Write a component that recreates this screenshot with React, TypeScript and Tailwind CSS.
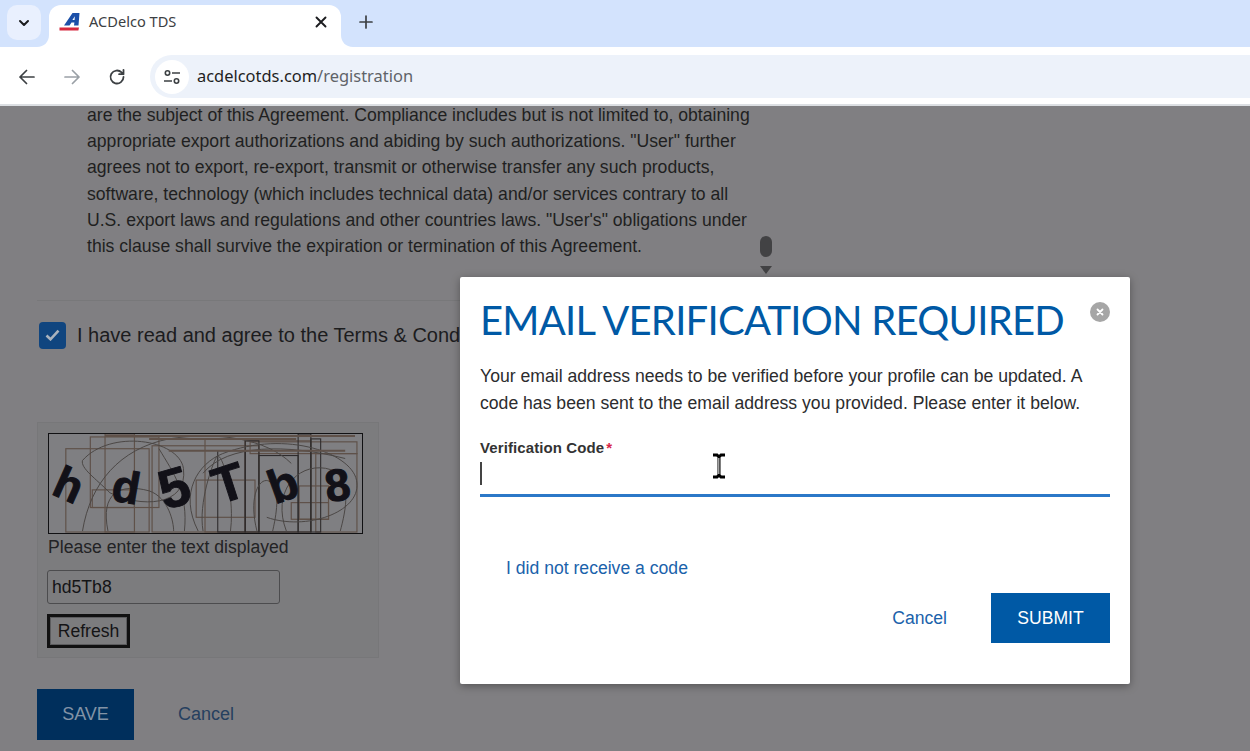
import React from "react";

const lines = [
  "are the subject of this Agreement. Compliance includes but is not limited to, obtaining",
  'appropriate export authorizations and abiding by such authorizations. "User" further',
  "agrees not to export, re-export, transmit or otherwise transfer any such products,",
  "software, technology (which includes technical data) and/or services contrary to all",
  'U.S. export laws and regulations and other countries laws. "User\'s" obligations under',
  "this clause shall survive the expiration or termination of this Agreement.",
];

function Captcha() {
  const rects = [
    [40, 3, 70, 72], [55, 0, 30, 100], [15, 15, 85, 85], [103, 12, 109, 88], [157, 5, 41, 95],
    [198, 7, 67, 93], [203, 8, 109, 12], [42, 57, 43, 18], [148, 47, 60, 38], [245, 70, 38, 17],
    [253, 53, 30, 34], [270, 20, 42, 80],
  ];
  const dark = [[170, 17, 28, 83], [198, 7, 14, 93], [212, 22, 40, 78], [252, 0, 13, 100], [265, 5, 10, 95]];
  const curves = [
    "M32 27 C60 -5 130 5 135 35 C140 75 90 75 60 60 C45 45 30 35 32 27",
    "M32 99 C40 50 70 15 120 5 C170 -3 220 5 245 30",
    "M150 99 C130 60 150 30 175 20 C240 -5 310 20 312 50 C315 80 260 99 220 85",
    "M58 99 C50 60 70 50 100 58 C120 65 125 90 125 99",
    "M155 99 C150 70 165 30 168 25 C172 10 188 60 183 99",
    "M240 99 C225 60 250 30 280 35 C310 40 300 80 295 99",
    "M155 40 C180 10 240 10 300 25 M110 15 C125 40 140 60 136 99",
    "M210 99 C200 60 215 40 225 50 C235 60 228 90 226 99",
  ];
  const letters: [string, number, number, number, number][] = [
    ["h", 19, 68, 24, 46],
    ["d", 77, 70, 10, 46],
    ["5", 126, 74, -16, 56],
    ["T", 181, 68, -18, 52],
    ["b", 236, 68, -20, 48],
    ["8", 292, 68, -8, 46],
  ];
  return (
    <svg width="315" height="101" viewBox="0 0 315 101" className="box-border block border border-[#111113] bg-[#7f7f82]">
      {rects.map((r, i) => (
        <rect key={i} x={r[0]} y={r[1]} width={r[2]} height={r[3]} fill="none" stroke="#5f5149" strokeWidth="1.2" />
      ))}
      {dark.map((r, i) => (
        <rect key={i} x={r[0]} y={r[1]} width={r[2]} height={r[3]} fill="none" stroke="#2d2a2b" strokeWidth="1.1" />
      ))}
      {curves.map((d, i) => (
        <path key={i} d={d} fill="none" stroke="#4a4644" strokeWidth="1" />
      ))}
      <path d="M55 2 H310 M100 5 H250 M120 17 H300" stroke="#5f5149" strokeWidth="2" fill="none" />
      {letters.map(([c, x, y, r, s]) => (
        <text
          key={c}
          x={x}
          y={y}
          transform={`rotate(${r} ${x} ${y - 18})`}
          fontFamily="'Liberation Sans', sans-serif"
          fontWeight="700"
          fontSize={s}
          fill="#121118"
          stroke="#121118"
          strokeWidth="1"
          textAnchor="middle"
        >
          {c}
        </text>
      ))}
    </svg>
  );
}

export default function App() {
  return (
    <div className="relative flex h-[751px] w-[1250px] flex-col overflow-hidden font-['Liberation_Sans',Arial,sans-serif]">
      {/* Tab strip */}
      <div className="flex h-[47px] shrink-0 items-end bg-[#d3e3fd] pl-[7px]">
        <div className="mb-[7px] flex h-[35px] w-[34px] items-center justify-center rounded-[10px] bg-[#e9f0fe]">
          <svg width="14" height="14" viewBox="0 0 14 14" fill="none" stroke="#1b1c1f" strokeWidth="2" strokeLinecap="round" strokeLinejoin="round">
            <path d="M3 5l4 4 4-4" />
          </svg>
        </div>
        <div className="relative ml-[8px] flex h-[42px] w-[292px] items-center rounded-t-[12px] bg-white pb-[8px] pl-[10px] pr-[14px]">
          <svg width="12" height="12" viewBox="0 0 12 12" className="absolute bottom-0 left-[-12px]">
            <path d="M12 0V12H0C7 12 12 7 12 0Z" fill="#fff" />
          </svg>
          <svg width="12" height="12" viewBox="0 0 12 12" className="absolute bottom-0 right-[-12px]">
            <path d="M0 0V12H12C5 12 0 7 0 0Z" fill="#fff" />
          </svg>
          <svg width="21" height="20" viewBox="0 0 21 20" className="shrink-0">
            <path d="M5 13.5 L13.5 1 H20.5 L19.5 13.5 H15 L15.4 10.5 H12.5 L10.5 13.5 Z" fill="#1c50a8" />
            <path d="M13.4 8 L15.8 4.3 L15.6 8 Z" fill="#fff" />
            <path d="M0.5 15.5 H20 L19.4 18.5 H0.5 Z" fill="#d6293e" />
          </svg>
          <span className="ml-[9px] flex-1 font-['Noto_Sans',sans-serif] text-[14.6px] text-[#3c4043]">ACDelco TDS</span>
          <svg width="12" height="12" viewBox="0 0 12 12" stroke="#1b1c1f" strokeWidth="1.9" strokeLinecap="round">
            <path d="M1.5 1.5l9 9M10.5 1.5l-9 9" />
          </svg>
        </div>
        <div className="mb-[13px] ml-[18px] flex h-[24px] w-[14px] items-center">
          <svg width="14" height="14" viewBox="0 0 14 14" stroke="#3c4043" strokeWidth="1.7" strokeLinecap="round">
            <path d="M7 1v12M1 7h12" />
          </svg>
        </div>
      </div>

      {/* Toolbar */}
      <div className="flex h-[59px] shrink-0 items-center border-b-2 border-[#dcdfe3] bg-white pl-[19px] pt-[2px]">
        <svg width="16" height="16" viewBox="0 0 16 16" fill="none" stroke="#3c4043" strokeWidth="1.7" strokeLinecap="round" strokeLinejoin="round">
          <path d="M15 8H1M7.5 1.5L1 8l6.5 6.5" />
        </svg>
        <svg width="16" height="16" viewBox="0 0 16 16" fill="none" stroke="#9aa0a6" strokeWidth="1.7" strokeLinecap="round" strokeLinejoin="round" className="ml-[29px]">
          <path d="M1 8h14M8.5 1.5L15 8l-6.5 6.5" />
        </svg>
        <svg width="18" height="18" viewBox="0 0 18 18" fill="none" stroke="#3c4043" strokeWidth="1.8" strokeLinecap="round" strokeLinejoin="round" className="ml-[28px]">
          <path d="M15.5 9a6.5 6.5 0 1 1-1.9-4.6L15.5 6.2M15.5 1.8v4.4h-4.4" />
        </svg>
        <div className="ml-[24px] flex h-[43px] flex-1 items-center rounded-l-[22px] bg-[#edf2fa] pl-[5px]">
          <div className="flex h-[34px] w-[34px] items-center justify-center rounded-full bg-white">
            <svg width="18" height="16" viewBox="0 0 18 16" fill="none" stroke="#3c4043" strokeWidth="1.6">
              <circle cx="4.5" cy="4" r="2.2" />
              <path d="M9 4h8M1 12h8" />
              <circle cx="13.5" cy="12" r="2.2" />
            </svg>
          </div>
          <span className="ml-[8px] font-['Noto_Sans',sans-serif] text-[16.45px] text-[#1f1f1f]">
            acdelcotds.com<span className="text-[#5f6368]">/registration</span>
          </span>
        </div>
      </div>

      {/* Page */}
      <div className="relative flex-1 bg-[#807f82] text-[#1c1c1e]">
        <div className="flex w-[770px] flex-col pl-[37px]">
          <div className="-mt-[4.5px] pl-[50px]">
            {lines.map((l) => (
              <div key={l} className="h-[26.4px] whitespace-nowrap text-[17.63px] leading-[26.4px] text-[#1f1f21]">
                {l}
              </div>
            ))}
          </div>
          <div className="mt-[40.5px] h-px w-[730px] bg-[#78787a]" />
          <div className="ml-[2px] mt-[20px] flex h-[28px] items-center">
            <div className="flex h-[27px] w-[27px] items-center justify-center rounded-[4px] bg-[#10457f]">
              <svg width="15" height="12" viewBox="0 0 15 12" fill="none" stroke="#a9b2bd" strokeWidth="2.6" strokeLinejoin="miter">
                <path d="M1.5 6.5l4 3.8 8-8.6" />
              </svg>
            </div>
            <span className="ml-[11px] whitespace-nowrap text-[20px] text-[#1c1c1e]">I have read and agree to the Terms &amp; Conditions</span>
          </div>
          <div className="mt-[73px] h-[236px] w-[342px] border border-[#777779] bg-[#7c7c7e] pl-[10px] pt-[10px]">
            <Captcha />
            <div className="mt-[1px] text-[17.6px] leading-[24px] text-[#232325]">Please enter the text displayed</div>
            <div className="-ml-[1px] mt-[11px] flex h-[34px] w-[233px] items-center rounded-[3px] border border-[#4c4c4e] pl-[4px] text-[17.6px] text-[#141416]">hd5Tb8</div>
            <div className="-ml-[1px] mt-[10px] flex h-[34px] w-[83px] items-center justify-center border-[3px] border-[#111] text-[17.6px] text-[#141416] shadow-[inset_0_0_0_1px_#5c5c5e]">Refresh</div>
          </div>
          <div className="mt-[31px] flex items-center">
            <div className="flex h-[51px] w-[97px] items-center justify-center bg-[#002f5c] text-[18px] text-[#8293a6]">SAVE</div>
            <span className="ml-[44px] text-[18px] text-[#26405f]">Cancel</span>
          </div>
        </div>

        {/* Scroll indicator */}
        <div className="absolute left-[760px] top-[130px] h-[21px] w-[12px] rounded-[6px] bg-[#424244]" />
        <div className="absolute left-[760px] top-[160px] h-0 w-0 border-x-[6px] border-t-[8px] border-x-transparent border-t-[#424244]" />

        {/* Modal */}
        <div className="absolute left-[460px] top-[171px] flex h-[407px] w-[670px] flex-col rounded-[2px] bg-white pl-[20px] pr-[20px] shadow-[0_2px_8px_rgba(0,0,0,0.35)]">
          <div className="relative mt-[15px] h-[56px] whitespace-nowrap font-['Lato',sans-serif] text-[40px] leading-[56px] tracking-[-0.75px] text-[#0059a5]">
            EMAIL VERIFICATION REQUIRED
            <div className="absolute right-0 top-[10px] flex h-[20px] w-[20px] items-center justify-center rounded-full bg-[#a6a6a6]">
              <svg width="8" height="8" viewBox="0 0 8 8" stroke="#fff" strokeWidth="1.8" strokeLinecap="round">
                <path d="M1.5 1.5l5 5M6.5 1.5l-5 5" />
              </svg>
            </div>
          </div>
          <p className="mt-[15px] text-[17.63px] leading-[27px] text-[#2c2c2e]">
            Your email address needs to be verified before your profile can be updated. A code has been sent to the email address you provided. Please enter it below.
          </p>
          <div className="mt-[21px] text-[15px] font-bold leading-[20px] tracking-[0.1px] text-[#333]">
            Verification Code<span className="ml-[2px] text-[#d8264a]">*</span>
          </div>
          <div className="relative h-[39px] border-b-[3px] border-[#2b78c8] pt-[4px]">
            <div className="h-[23px] w-[2px] bg-[#444]" />
            <svg width="16" height="26" viewBox="0 0 16 26" className="absolute left-[231px] top-[-5px]" fill="none">
              <path d="M2 2h4l2 2 2-2h4M8 4v18M2 24h4l2-2 2 2h4" stroke="#000" strokeWidth="3" />
              <path d="M7.8 5v16" stroke="#ccc" strokeWidth="1.2" />
            </svg>
          </div>
          <div className="ml-[26px] mt-[59px] text-[17.6px] leading-[24px] text-[#1a62ab]">I did not receive a code</div>
          <div className="mt-[13px] flex items-center justify-end">
            <span className="text-[17.6px] text-[#1a62ab]">Cancel</span>
            <div className="ml-[44px] flex h-[50px] w-[119px] items-center justify-center bg-[#0059a5] text-[17.6px] text-white">SUBMIT</div>
          </div>
        </div>
      </div>
    </div>
  );
}
